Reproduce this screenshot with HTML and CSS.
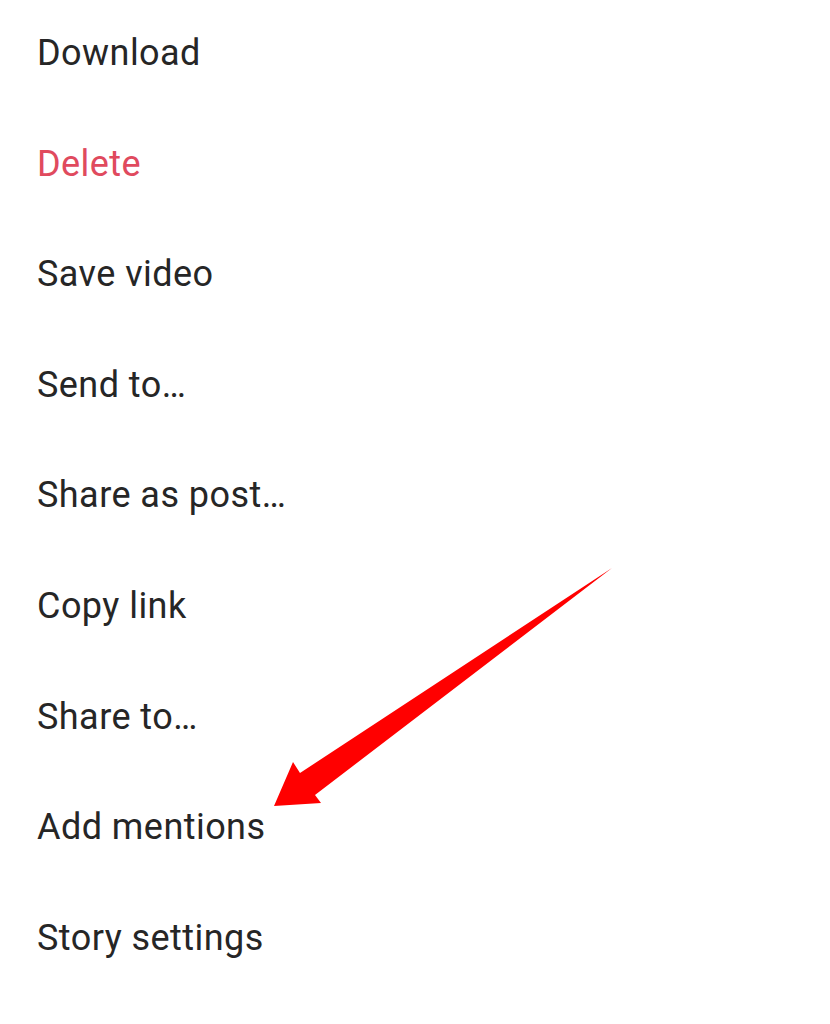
FILE: index.html
```html
<!DOCTYPE html>
<html lang="en">
<head>
  <meta charset="UTF-8">
  <meta name="viewport" content="width=device-width, initial-scale=1.0">
  <title>Story options</title>
  <link rel="stylesheet" href="styles.css">
</head>
<body>
  <div class="sheet">
    <ul class="menu">
      <li class="menu-item">Download</li>
      <li class="menu-item danger">Delete</li>
      <li class="menu-item">Save video</li>
      <li class="menu-item">Send to…</li>
      <li class="menu-item">Share as post…</li>
      <li class="menu-item">Copy link</li>
      <li class="menu-item">Share to…</li>
      <li class="menu-item">Add mentions</li>
      <li class="menu-item">Story settings</li>
    </ul>

    <!-- annotation pointing at "Add mentions" -->
    <svg class="arrow" width="830" height="1024" viewBox="0 0 830 1024">
      <polygon fill="#ff0000" points="612,568 315,795 321,803 274,806 293,762 300,773"/>
    </svg>
  </div>
</body>
</html>
```

FILE: styles.css
```css
* {
  box-sizing: border-box;
  margin: 0;
  padding: 0;
}

body {
  background: #ffffff;
  font-family: Roboto, 'Noto Sans', sans-serif;
  color: #262626;
}

.sheet {
  position: relative;
  width: 830px;
  height: 1024px;
  overflow: hidden;
}

.menu {
  list-style: none;
}

.menu-item {
  font-size: 36px;
  line-height: 44px;
  padding: 31px 0 35.6px 37px;
  letter-spacing: 0.45px;
}

.menu-item.danger {
  color: #e04a5e;
}

.arrow {
  position: absolute;
  top: 0;
  left: 0;
  pointer-events: none;
}
```
